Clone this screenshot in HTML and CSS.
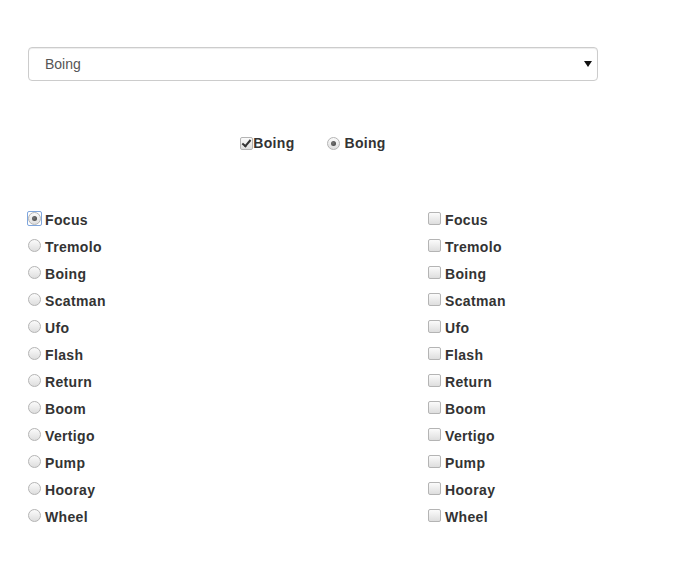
FILE: index.html
```html
<!DOCTYPE html>
<html lang="en">
<head>
  <meta charset="UTF-8">
  <title>Sounds</title>
  <link rel="stylesheet" href="styles.css">
</head>
<body>

  <div class="page">
    <div class="select-wrap">
      <select class="sound-select">
        <option>Boing</option>
        <option>Focus</option>
        <option>Tremolo</option>
      </select>
      <svg class="caret" width="8" height="6" viewBox="0 0 8 6"><path d="M0 0h8L4 6z" fill="#111"/></svg>
    </div>

    <div class="toggles">
      <label class="toggle"><input type="checkbox" class="box" checked>Boing</label>
      <label class="toggle spaced"><input type="radio" class="dot" name="single" checked>Boing</label>
    </div>

    <div class="lists">
      <div class="list">
        <label class="item"><span class="ring"><input type="radio" class="dot" name="fx" checked></span>Focus</label>
        <label class="item"><input type="radio" class="dot" name="fx">Tremolo</label>
        <label class="item"><input type="radio" class="dot" name="fx">Boing</label>
        <label class="item"><input type="radio" class="dot" name="fx">Scatman</label>
        <label class="item"><input type="radio" class="dot" name="fx">Ufo</label>
        <label class="item"><input type="radio" class="dot" name="fx">Flash</label>
        <label class="item"><input type="radio" class="dot" name="fx">Return</label>
        <label class="item"><input type="radio" class="dot" name="fx">Boom</label>
        <label class="item"><input type="radio" class="dot" name="fx">Vertigo</label>
        <label class="item"><input type="radio" class="dot" name="fx">Pump</label>
        <label class="item"><input type="radio" class="dot" name="fx">Hooray</label>
        <label class="item"><input type="radio" class="dot" name="fx">Wheel</label>
      </div>
      <div class="list">
        <label class="item"><input type="checkbox" class="box">Focus</label>
        <label class="item"><input type="checkbox" class="box">Tremolo</label>
        <label class="item"><input type="checkbox" class="box">Boing</label>
        <label class="item"><input type="checkbox" class="box">Scatman</label>
        <label class="item"><input type="checkbox" class="box">Ufo</label>
        <label class="item"><input type="checkbox" class="box">Flash</label>
        <label class="item"><input type="checkbox" class="box">Return</label>
        <label class="item"><input type="checkbox" class="box">Boom</label>
        <label class="item"><input type="checkbox" class="box">Vertigo</label>
        <label class="item"><input type="checkbox" class="box">Pump</label>
        <label class="item"><input type="checkbox" class="box">Hooray</label>
        <label class="item"><input type="checkbox" class="box">Wheel</label>
      </div>
    </div>
  </div>

</body>
</html>
```

FILE: styles.css
```css
body {
  margin: 0;
  background: #fff;
  font-family: "Liberation Sans", Arial, sans-serif;
  font-size: 14px;
  color: #333;
}
.page {
  padding: 47px 0 0 28px;
  width: 570px;
}
.select-wrap {
  position: relative;
}
.sound-select {
  display: block;
  width: 570px;
  height: 34px;
  padding: 0 16px;
  font-family: inherit;
  font-size: 14px;
  color: #555;
  background: #fff;
  border: 1px solid #ccc;
  border-radius: 4px;
  box-shadow: inset 0 1px 1px rgba(0,0,0,0.075);
  -webkit-appearance: none;
  appearance: none;
}
.caret {
  position: absolute;
  right: 6px;
  top: 14px;
  pointer-events: none;
}
.toggles {
  display: flex;
  justify-content: center;
  margin-top: 52px;
  height: 20px;
}
.toggle {
  display: flex;
  align-items: center;
  font-weight: bold;
  letter-spacing: 0.3px;
}
.toggle.spaced {
  margin-left: 32px;
}
.toggle .dot {
  margin-right: 5px;
}
.lists {
  display: grid;
  grid-template-columns: 400px 1fr;
  margin-top: 53px;
}
.item {
  display: flex;
  align-items: center;
  height: 27px;
  font-weight: bold;
  letter-spacing: 0.35px;
}
.item input,
.item .ring {
  margin-right: 4px;
  top: -1px;
}

/* old style form controls */
.dot,
.box {
  -webkit-appearance: none;
  appearance: none;
  width: 13px;
  height: 13px;
  margin: 0;
  border: 1px solid #b4b4b4;
  background: linear-gradient(#fbfbfb, #dedede);
  flex: none;
  position: relative;
}
.dot {
  border-radius: 50%;
}
.box {
  border-radius: 2px;
}
.dot:checked::after {
  content: "";
  position: absolute;
  left: 3px;
  top: 3px;
  width: 5px;
  height: 5px;
  border-radius: 50%;
  background: radial-gradient(circle at 40% 40%, #777, #3c3c3c);
}
.box:checked::after {
  content: "";
  position: absolute;
  left: 3px;
  top: 0;
  width: 3px;
  height: 7px;
  border: solid #333;
  border-width: 0 2px 2px 0;
  transform: rotate(40deg);
}
.ring {
  display: flex;
  position: relative;
  border: 1px solid #7fa6dd;
  border-radius: 2px;
  margin-left: -1px;
}
.item .ring {
  margin-right: 3px;
}
.ring .dot {
  margin: 0;
  top: 0;
}
```
